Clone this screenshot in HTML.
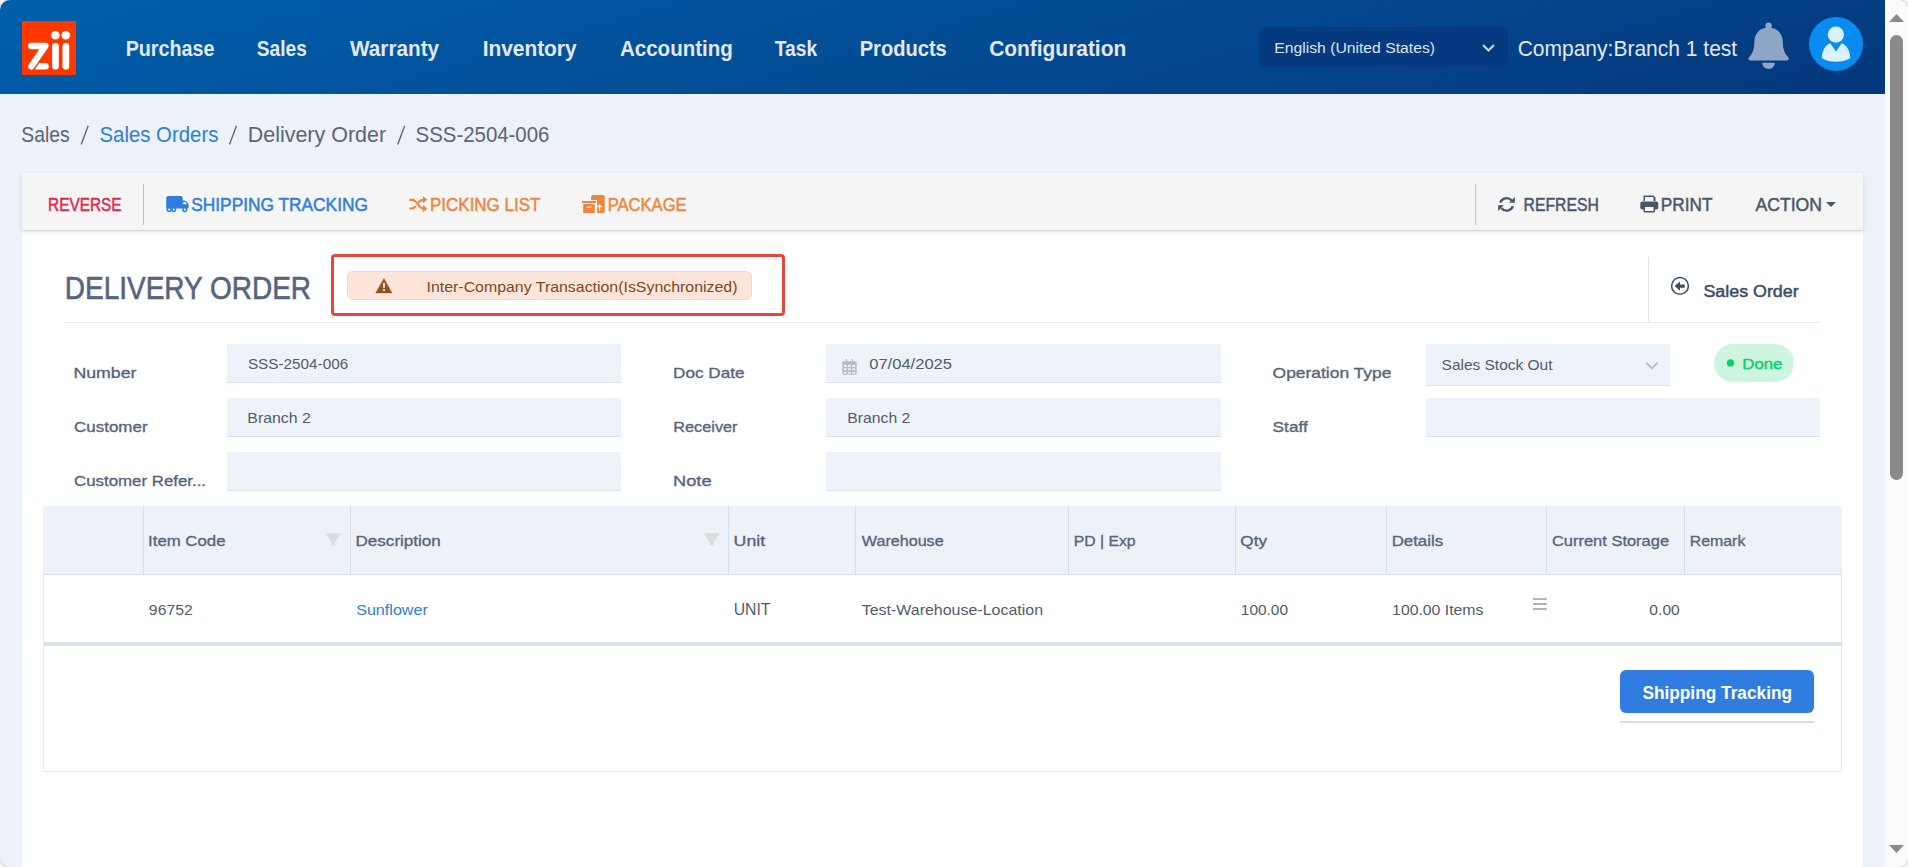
<!DOCTYPE html>
<html><head><meta charset="utf-8"><title>Delivery Order</title>
<style>
html,body{margin:0;padding:0;width:1908px;height:867px;overflow:hidden;background:#f6f5f2;}
body{font-family:"Liberation Sans",sans-serif;position:relative;}
.win{position:absolute;left:0;top:0;width:1908px;height:867px;border-radius:10px;overflow:hidden;background:#edf1f8;box-shadow:0 0 0 1px rgba(0,0,0,0.10);}
.a{position:absolute;box-sizing:border-box;}
svg.ov{position:absolute;left:0;top:0;z-index:10;}
svg text{font-family:"Liberation Sans",sans-serif;white-space:pre;}
</style></head><body>
<div class="win">
<!-- header -->
<div class="a" style="left:0;top:0;width:1885px;height:94px;background:linear-gradient(164deg,#005fac 0%,#034c94 50%,#05377c 100%);"></div>
<!-- language select -->
<div class="a" style="left:1259px;top:27px;width:249px;height:40px;border-radius:7px;background:#063a80;"></div>
<!-- avatar -->
<div class="a" style="left:1809px;top:16.8px;width:54px;height:54px;border-radius:50%;background:#0a8bef;"></div>
<!-- toolbar -->
<div class="a" style="left:22px;top:173px;width:1841px;height:57px;background:#f5f5f5;box-shadow:0 1px 1px rgba(0,0,0,0.10),0 2px 6px rgba(0,0,0,0.09);z-index:1;"></div>
<div class="a" style="left:143px;top:184px;width:1px;height:41px;background:#b9c3d3;z-index:2;"></div>
<div class="a" style="left:1475px;top:184px;width:1px;height:41px;background:#b9c3d3;z-index:2;"></div>
<!-- white card -->
<div class="a" style="left:22px;top:230px;width:1841px;height:640px;background:#ffffff;"></div>
<!-- title area -->
<div class="a" style="left:65px;top:322px;width:1755px;height:1px;background:#e6ebf2;"></div>
<div class="a" style="left:1648px;top:257px;width:1px;height:65px;background:#dfe5ef;"></div>
<div class="a" style="left:331px;top:254px;width:454px;height:62px;border:3px solid #e8463d;border-radius:4px;"></div>
<div class="a" style="left:347px;top:271px;width:405px;height:29px;border:1px solid #fad3c1;background:#fde5d9;border-radius:6px;"></div>
<!-- inputs -->
<div class="a" style="left:227px;top:344px;width:394px;height:39px;background:#eef3fa;border-bottom:1px solid #d9e2ee;"></div>
<div class="a" style="left:227px;top:398px;width:394px;height:39px;background:#eef3fa;border-bottom:1px solid #d9e2ee;"></div>
<div class="a" style="left:227px;top:452px;width:394px;height:39px;background:#eef3fa;border-bottom:1px solid #d9e2ee;"></div>
<div class="a" style="left:826px;top:344px;width:395px;height:39px;background:#eef3fa;border-bottom:1px solid #d9e2ee;"></div>
<div class="a" style="left:826px;top:398px;width:395px;height:39px;background:#eef3fa;border-bottom:1px solid #d9e2ee;"></div>
<div class="a" style="left:826px;top:452px;width:395px;height:39px;background:#eef3fa;border-bottom:1px solid #d9e2ee;"></div>
<div class="a" style="left:1426px;top:344px;width:244px;height:42px;background:#eef3fa;border-bottom:1px solid #d9e2ee;"></div>
<div class="a" style="left:1426px;top:398px;width:394px;height:39px;background:#eef3fa;border-bottom:1px solid #d9e2ee;"></div>
<div class="a" style="left:1714px;top:344px;width:80px;height:38px;border-radius:19px;background:#cdf5df;"></div>
<!-- table -->
<div class="a" style="left:43px;top:506px;width:1799px;height:266px;border:1px solid #e4eaf3;border-top:none;"></div>
<div class="a" style="left:43px;top:506px;width:1799px;height:69px;background:#edf2f9;border-bottom:1px solid #d6deea;"></div>
<div class="a" style="left:143px;top:506px;width:1px;height:68px;background:#d6deea;"></div>
<div class="a" style="left:350px;top:506px;width:1px;height:68px;background:#d6deea;"></div>
<div class="a" style="left:728px;top:506px;width:1px;height:68px;background:#d6deea;"></div>
<div class="a" style="left:855px;top:506px;width:1px;height:68px;background:#d6deea;"></div>
<div class="a" style="left:1068px;top:506px;width:1px;height:68px;background:#d6deea;"></div>
<div class="a" style="left:1235px;top:506px;width:1px;height:68px;background:#d6deea;"></div>
<div class="a" style="left:1386px;top:506px;width:1px;height:68px;background:#d6deea;"></div>
<div class="a" style="left:1546px;top:506px;width:1px;height:68px;background:#d6deea;"></div>
<div class="a" style="left:1684px;top:506px;width:1px;height:68px;background:#d6deea;"></div>
<div class="a" style="left:43px;top:642px;width:1799px;height:4px;background:#dce2ea;"></div>
<!-- button -->
<div class="a" style="left:1620px;top:670px;width:194px;height:43px;border-radius:6px;background:#2f7de1;"></div>
<div class="a" style="left:1620px;top:721px;width:194px;height:2px;background:#d5dfec;"></div>
<!-- scrollbar -->
<div class="a" style="left:1885px;top:0;width:23px;height:867px;background:#fbfbfb;"></div>
<div class="a" style="left:1890px;top:35px;width:13px;height:445px;border-radius:6.5px;background:#8a8a8a;"></div>

<svg class="ov" width="1908" height="867" viewBox="0 0 1908 867">
<!-- logo -->
<rect x="22" y="21" width="54" height="54" fill="#ff3800"/>
<g fill="#ffffff">
<circle cx="55.4" cy="35.2" r="4.3"/><circle cx="65.8" cy="35.2" r="4.3"/>
<rect x="52.1" y="42.9" width="6.7" height="26.6" rx="3.35"/><rect x="62.5" y="42.9" width="6.7" height="26.6" rx="3.35"/>
<path d="M39.2 63 H45.45 A3.25 3.25 0 0 1 45.45 69.5 H34.7 Z"/>
</g>
<path d="M31.3 46 H45.4 L31.4 66.3" fill="none" stroke="#ffffff" stroke-width="6.4" stroke-linecap="round" stroke-linejoin="round"/>
<!-- lang chevron -->
<path d="M1483 45 L1488.5 50.5 L1494 45" fill="none" stroke="#cdd6e4" stroke-width="2"/>
<!-- bell -->
<g fill="#8ea7c8">
<circle cx="1768.6" cy="25.8" r="3.2"/>
<path d="M1768.6 27.6 C1759 27.6 1754.5 34.5 1754.4 42 C1754.3 50 1752 54 1749.3 56.8 C1747.8 58.3 1748.3 60.4 1750.5 60.4 H1786.7 C1788.9 60.4 1789.4 58.3 1787.9 56.8 C1785.2 54 1782.9 50 1782.8 42 C1782.7 34.5 1778.2 27.6 1768.6 27.6 Z"/>
<path d="M1762.3 62.8 H1774.8 C1774.8 66.5 1772 69 1768.55 69 C1765.1 69 1762.3 66.5 1762.3 62.8 Z"/>
</g>
<!-- avatar person -->
<g fill="#d8f2fe">
<circle cx="1835.9" cy="34.6" r="8.1"/>
<path d="M1830.3 43.3 L1835.9 51.6 L1841.7 43.3 C1846.8 45.2 1850 50.5 1850.3 58.3 C1846 60.7 1841 61.8 1836 61.8 C1831 61.8 1826 60.7 1821.8 58.3 C1822.1 50.5 1825.3 45.2 1830.3 43.3 Z"/>
</g>
<!-- truck -->
<path d="M168.2 196 H180.7 A2 2 0 0 1 182.7 198 V200.4 H184.6 C186 200.4 188.7 203.3 188.7 205 V207 A1.6 1.6 0 0 1 187.1 208.6 H166.2 V198 A2.2 2.2 0 0 1 168.2 196 Z" fill="#2f7de1"/>
<path d="M183.2 202 H185.4 L186.9 204.2 H183.2 Z" fill="#f5f5f5"/>
<g fill="#f5f5f5" stroke="#2f7de1" stroke-width="1.5">
<circle cx="169.1" cy="209.6" r="1.85"/><circle cx="173.7" cy="209.6" r="1.85"/><circle cx="184.8" cy="209.6" r="1.85"/>
</g>
<!-- shuffle -->
<g fill="none" stroke="#f1843e" stroke-width="2.2">
<path d="M409.3 199.8 H412.3 C414.8 199.8 416 201.5 418 204.5 C420 207.5 421 208.6 423.8 208.6"/>
<path d="M409.3 208.5 H411.8 C413.5 208.5 414.6 207.7 415.8 206"/>
<path d="M418.3 202.6 C419.6 200.8 420.9 199.8 423.8 199.8"/>
</g>
<g fill="#f1843e"><path d="M423 196 L427.3 199.7 L423 203.3 Z"/><path d="M423 205 L427.3 208.6 L423 212.2 Z"/></g>
<!-- package -->
<rect x="591.2" y="195" width="13.5" height="18" rx="1.6" fill="#f1843e"/>
<rect x="581.3" y="200.1" width="15.8" height="13.6" fill="#f5f5f5"/>
<rect x="582" y="201" width="14" height="2" fill="#f1843e"/>
<rect x="583.2" y="204.1" width="11.6" height="8.9" rx="0.8" fill="#f1843e"/>
<rect x="587" y="206.5" width="4.2" height="1.3" fill="#f5f5f5"/>
<path d="M599.6 210.8 V205 M597.4 207.2 L599.6 205 L601.8 207.2" stroke="#f5f5f5" stroke-width="1.2" fill="none"/>
<!-- refresh -->
<g fill="none" stroke="#4a5669" stroke-width="2.3">
<path d="M1500.2 202.6 A6.7 6.7 0 0 1 1511.6 200.6"/>
<path d="M1512.9 206.2 A6.7 6.7 0 0 1 1501.4 208.2"/>
</g>
<g fill="#4a5669"><path d="M1509 202.8 H1514.9 V196.9 Z"/><path d="M1504 205.2 H1498.1 V211.1 Z"/></g>
<!-- print -->
<g fill="#4a5669">
<path d="M1643.5 195.5 H1653.5 L1655.5 197.5 V201 H1643.5 Z"/>
<rect x="1640.3" y="201.5" width="18" height="8" rx="2"/>
<rect x="1643.5" y="205.5" width="11.5" height="7" rx="1"/>
</g>
<rect x="1645" y="207" width="8.5" height="4" fill="#f5f5f5"/>
<rect x="1645" y="197" width="8.5" height="4" fill="#f5f5f5"/>
<!-- caret -->
<path d="M1826 202 H1836 L1831 207 Z" fill="#4a5669"/>
<!-- warning -->
<path d="M383.9 278.6 L392.1 292.9 H375.7 Z" fill="#95501f" stroke="#95501f" stroke-width="0.4" stroke-linejoin="round"/>
<rect x="383" y="282.9" width="2" height="4.9" fill="#fde5d9"/><rect x="383" y="289.1" width="2" height="1.8" fill="#fde5d9"/>
<!-- circle arrow -->
<circle cx="1680" cy="285.9" r="8.35" fill="none" stroke="#3f4d63" stroke-width="1.55"/>
<path d="M1674.6 286.1 L1680 281.6 V284.4 H1684.7 V287.8 H1680 V290.8 Z" fill="#3f4d63"/>
<!-- calendar -->
<g fill="#b5b9c9">
<rect x="842.3" y="361.2" width="14.4" height="13.6" rx="1.4"/>
<rect x="845.6" y="359" width="1.5" height="3"/><rect x="851.6" y="359" width="1.5" height="3"/>
</g>
<g fill="#eef3fa">
<rect x="843.9" y="364.9" width="2.8" height="2"/><rect x="848" y="364.9" width="2.9" height="2"/><rect x="852.2" y="364.9" width="3" height="2"/>
<rect x="843.9" y="368.3" width="2.8" height="1.8"/><rect x="848" y="368.3" width="2.9" height="1.8"/><rect x="852.2" y="368.3" width="3" height="1.8"/>
<rect x="843.9" y="371.9" width="2.8" height="1.7"/><rect x="848" y="371.9" width="2.9" height="1.7"/><rect x="852.2" y="371.9" width="3" height="1.7"/>
</g>
<!-- select chevron -->
<path d="M1646.2 362.8 L1651.8 368.4 L1657.4 362.8" fill="none" stroke="#b9c0cb" stroke-width="2"/>
<!-- done dot -->
<circle cx="1730.5" cy="362.9" r="3.6" fill="#0ccd6e"/>
<!-- filters -->
<path d="M325.2 533.2 H341.1 L335 541.9 V546.7 L331 544.6 V541.9 Z" fill="#dbdcdf"/>
<path d="M703.8 533.2 H719.7 L713.6 541.9 V546.7 L709.6 544.6 V541.9 Z" fill="#dbdcdf"/>
<!-- hamburger -->
<g fill="#abb5c6"><rect x="1533" y="598" width="13.8" height="2"/><rect x="1533" y="603" width="13.8" height="2"/><rect x="1533" y="608" width="13.8" height="2"/></g>
<!-- scroll arrows -->
<path d="M1889 22 L1896.5 14 L1904 22 Z" fill="#8a8a8a"/>
<path d="M1889 845 L1904 845 L1896.5 853 Z" fill="#8a8a8a"/>
<!-- breadcrumb slashes -->
<g stroke="#5b6579" stroke-width="1.35" fill="none">
<path d="M81.2 144.4 L88.2 125.8"/><path d="M229.5 144.4 L236.5 125.8"/><path d="M397.7 144.4 L404.7 125.8"/>
</g>

<text x="125.72" y="56.00" font-size="21.95" fill="#e3e9f3" textLength="88.62" lengthAdjust="spacingAndGlyphs" style="font-weight:bold;">Purchase</text>
<text x="256.83" y="56.00" font-size="21.95" fill="#e3e9f3" textLength="50.00" lengthAdjust="spacingAndGlyphs" style="font-weight:bold;">Sales</text>
<text x="350.00" y="56.00" font-size="21.95" fill="#e3e9f3" textLength="89.15" lengthAdjust="spacingAndGlyphs" style="font-weight:bold;">Warranty</text>
<text x="482.64" y="56.00" font-size="21.95" fill="#e3e9f3" textLength="93.98" lengthAdjust="spacingAndGlyphs" style="font-weight:bold;">Inventory</text>
<text x="619.89" y="56.00" font-size="21.95" fill="#e3e9f3" textLength="113.04" lengthAdjust="spacingAndGlyphs" style="font-weight:bold;">Accounting</text>
<text x="774.81" y="56.00" font-size="21.95" fill="#e3e9f3" textLength="42.40" lengthAdjust="spacingAndGlyphs" style="font-weight:bold;">Task</text>
<text x="859.69" y="56.00" font-size="21.95" fill="#e3e9f3" textLength="87.09" lengthAdjust="spacingAndGlyphs" style="font-weight:bold;">Products</text>
<text x="989.16" y="56.00" font-size="21.95" fill="#e3e9f3" textLength="137.08" lengthAdjust="spacingAndGlyphs" style="font-weight:bold;">Configuration</text>
<text x="1274.24" y="53.00" font-size="15.19" fill="#dde5f1" textLength="160.74" lengthAdjust="spacingAndGlyphs" style="">English (United States)</text>
<text x="1517.65" y="55.80" font-size="21.66" fill="#e3e9f3" textLength="219.56" lengthAdjust="spacingAndGlyphs" style="">Company:Branch 1 test</text>
<text x="21.33" y="142.00" font-size="22.09" fill="#5b6579" textLength="48.38" lengthAdjust="spacingAndGlyphs" style="">Sales</text>
<text x="99.48" y="142.00" font-size="22.09" fill="#2f7de1" textLength="118.94" lengthAdjust="spacingAndGlyphs" style="">Sales Orders</text>
<text x="247.78" y="142.00" font-size="22.09" fill="#5b6579" textLength="138.26" lengthAdjust="spacingAndGlyphs" style="">Delivery Order</text>
<text x="415.58" y="142.00" font-size="22.09" fill="#5b6579" textLength="133.84" lengthAdjust="spacingAndGlyphs" style="">SSS-2504-006</text>
<text x="48.07" y="211.00" font-size="18.90" fill="#e0284b" stroke="#e0284b" stroke-width="0.5" textLength="73.54" lengthAdjust="spacingAndGlyphs" style="">REVERSE</text>
<text x="191.22" y="211.00" font-size="18.90" fill="#2f7de1" stroke="#2f7de1" stroke-width="0.5" textLength="176.70" lengthAdjust="spacingAndGlyphs" style="">SHIPPING TRACKING</text>
<text x="430.04" y="211.00" font-size="18.90" fill="#f1843e" stroke="#f1843e" stroke-width="0.5" textLength="110.32" lengthAdjust="spacingAndGlyphs" style="">PICKING LIST</text>
<text x="607.67" y="211.00" font-size="18.90" fill="#f1843e" stroke="#f1843e" stroke-width="0.5" textLength="79.01" lengthAdjust="spacingAndGlyphs" style="">PACKAGE</text>
<text x="1523.54" y="211.00" font-size="18.90" fill="#4a5669" stroke="#4a5669" stroke-width="0.5" textLength="75.28" lengthAdjust="spacingAndGlyphs" style="">REFRESH</text>
<text x="1660.82" y="211.00" font-size="18.90" fill="#4a5669" stroke="#4a5669" stroke-width="0.5" textLength="51.73" lengthAdjust="spacingAndGlyphs" style="">PRINT</text>
<text x="1755.40" y="211.00" font-size="18.90" fill="#4a5669" stroke="#4a5669" stroke-width="0.5" textLength="66.66" lengthAdjust="spacingAndGlyphs" style="">ACTION</text>
<text x="64.76" y="298.80" font-size="31.69" fill="#55657d" stroke="#55657d" stroke-width="0.6" textLength="246.33" lengthAdjust="spacingAndGlyphs" style="">DELIVERY ORDER</text>
<text x="426.57" y="291.90" font-size="15.35" fill="#7e4527" textLength="310.86" lengthAdjust="spacingAndGlyphs" style="">Inter-Company Transaction(IsSynchronized)</text>
<text x="1703.40" y="296.60" font-size="17.30" fill="#3f4d63" stroke="#3f4d63" stroke-width="0.5" textLength="95.28" lengthAdjust="spacingAndGlyphs" style="">Sales Order</text>
<text x="73.48" y="377.90" font-size="15.41" fill="#56657a" stroke="#56657a" stroke-width="0.35" textLength="63.01" lengthAdjust="spacingAndGlyphs" style="">Number</text>
<text x="74.05" y="431.90" font-size="15.41" fill="#56657a" stroke="#56657a" stroke-width="0.35" textLength="73.48" lengthAdjust="spacingAndGlyphs" style="">Customer</text>
<text x="74.06" y="485.90" font-size="15.41" fill="#56657a" stroke="#56657a" stroke-width="0.35" textLength="131.98" lengthAdjust="spacingAndGlyphs" style="">Customer Refer...</text>
<text x="673.13" y="377.90" font-size="15.41" fill="#56657a" stroke="#56657a" stroke-width="0.35" textLength="71.30" lengthAdjust="spacingAndGlyphs" style="">Doc Date</text>
<text x="673.20" y="431.90" font-size="15.41" fill="#56657a" stroke="#56657a" stroke-width="0.35" textLength="64.36" lengthAdjust="spacingAndGlyphs" style="">Receiver</text>
<text x="673.04" y="485.90" font-size="15.41" fill="#56657a" stroke="#56657a" stroke-width="0.35" textLength="38.52" lengthAdjust="spacingAndGlyphs" style="">Note</text>
<text x="1272.62" y="377.90" font-size="15.41" fill="#56657a" stroke="#56657a" stroke-width="0.35" textLength="118.76" lengthAdjust="spacingAndGlyphs" style="">Operation Type</text>
<text x="1272.62" y="431.90" font-size="15.41" fill="#56657a" stroke="#56657a" stroke-width="0.35" textLength="35.15" lengthAdjust="spacingAndGlyphs" style="">Staff</text>
<text x="247.91" y="368.80" font-size="15.41" fill="#525b69" textLength="100.31" lengthAdjust="spacingAndGlyphs" style="">SSS-2504-006</text>
<text x="247.33" y="422.80" font-size="15.26" fill="#525b69" textLength="63.50" lengthAdjust="spacingAndGlyphs" style="">Branch 2</text>
<text x="869.24" y="368.80" font-size="15.41" fill="#525b69" textLength="82.72" lengthAdjust="spacingAndGlyphs" style="">07/04/2025</text>
<text x="847.34" y="422.80" font-size="15.26" fill="#525b69" textLength="62.99" lengthAdjust="spacingAndGlyphs" style="">Branch 2</text>
<text x="1441.60" y="369.70" font-size="15.12" fill="#525b69" textLength="110.85" lengthAdjust="spacingAndGlyphs" style="">Sales Stock Out</text>
<text x="1742.25" y="368.90" font-size="15.55" fill="#0ccd6e" stroke="#0ccd6e" stroke-width="0.45" textLength="40.21" lengthAdjust="spacingAndGlyphs" style="">Done</text>
<text x="148.09" y="545.90" font-size="15.26" fill="#56657a" stroke="#56657a" stroke-width="0.35" textLength="77.42" lengthAdjust="spacingAndGlyphs" style="">Item Code</text>
<text x="355.54" y="545.90" font-size="15.26" fill="#56657a" stroke="#56657a" stroke-width="0.35" textLength="85.31" lengthAdjust="spacingAndGlyphs" style="">Description</text>
<text x="733.57" y="545.90" font-size="15.26" fill="#56657a" stroke="#56657a" stroke-width="0.35" textLength="31.58" lengthAdjust="spacingAndGlyphs" style="">Unit</text>
<text x="861.82" y="545.90" font-size="15.26" fill="#56657a" stroke="#56657a" stroke-width="0.35" textLength="81.83" lengthAdjust="spacingAndGlyphs" style="">Warehouse</text>
<text x="1073.74" y="545.90" font-size="15.26" fill="#56657a" stroke="#56657a" stroke-width="0.35" textLength="61.83" lengthAdjust="spacingAndGlyphs" style="">PD | Exp</text>
<text x="1240.33" y="545.90" font-size="15.26" fill="#56657a" stroke="#56657a" stroke-width="0.35" textLength="26.68" lengthAdjust="spacingAndGlyphs" style="">Qty</text>
<text x="1391.65" y="545.90" font-size="15.26" fill="#56657a" stroke="#56657a" stroke-width="0.35" textLength="51.47" lengthAdjust="spacingAndGlyphs" style="">Details</text>
<text x="1551.98" y="545.90" font-size="15.26" fill="#56657a" stroke="#56657a" stroke-width="0.35" textLength="117.06" lengthAdjust="spacingAndGlyphs" style="">Current Storage</text>
<text x="1689.83" y="545.90" font-size="15.26" fill="#56657a" stroke="#56657a" stroke-width="0.35" textLength="55.48" lengthAdjust="spacingAndGlyphs" style="">Remark</text>
<text x="148.89" y="614.80" font-size="15.41" fill="#525b69" textLength="43.91" lengthAdjust="spacingAndGlyphs" style="">96752</text>
<text x="356.17" y="614.80" font-size="15.12" fill="#2f7de1" textLength="71.70" lengthAdjust="spacingAndGlyphs" style="">Sunflower</text>
<text x="733.72" y="614.80" font-size="15.70" fill="#525b69" textLength="36.74" lengthAdjust="spacingAndGlyphs" style="">UNIT</text>
<text x="861.68" y="614.80" font-size="15.12" fill="#525b69" textLength="181.40" lengthAdjust="spacingAndGlyphs" style="">Test-Warehouse-Location</text>
<text x="1240.84" y="614.80" font-size="15.41" fill="#525b69" textLength="47.18" lengthAdjust="spacingAndGlyphs" style="">100.00</text>
<text x="1392.12" y="614.80" font-size="15.41" fill="#525b69" textLength="91.26" lengthAdjust="spacingAndGlyphs" style="">100.00 Items</text>
<text x="1649.38" y="614.80" font-size="15.41" fill="#525b69" textLength="30.39" lengthAdjust="spacingAndGlyphs" style="">0.00</text>
<text x="1642.38" y="698.90" font-size="17.51" fill="#ffffff" textLength="149.69" lengthAdjust="spacingAndGlyphs" style="font-weight:bold;">Shipping Tracking</text>
</svg>
</div>
</body></html>
